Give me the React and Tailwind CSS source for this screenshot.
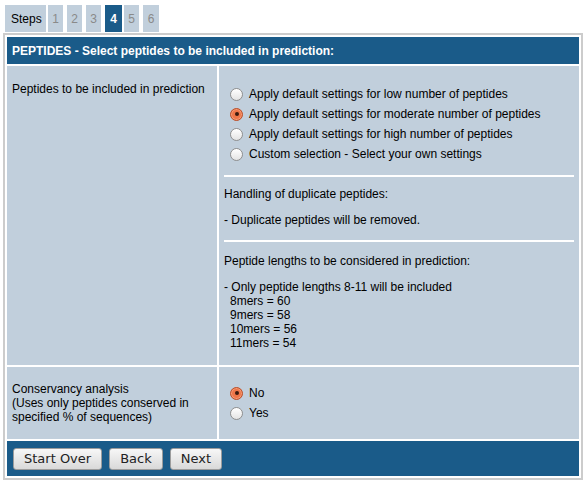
const OPTIONS = [
  "Apply default settings for low number of peptides",
  "Apply default settings for moderate number of peptides",
  "Apply default settings for high number of peptides",
  "Custom selection - Select your own settings"
];

const LENGTHS = ["8mers = 60", "9mers = 58", "10mers = 56", "11mers = 54"];

function Radio({ checked }) {
  if (checked) {
    return (
      <span className="flex h-[13px] w-[13px] shrink-0 items-center justify-center rounded-full border border-[#b9502b] bg-[#ee7649] shadow-[inset_0_0_0_1px_#f59a74]">
        <span className="h-[4px] w-[4px] rounded-full bg-[#3b1a0e]" />
      </span>
    );
  }
  return (
    <span className="h-[13px] w-[13px] shrink-0 rounded-full border border-[#8f8f8f] bg-linear-to-b from-white to-[#e4e4e4]" />
  );
}

function RadioRow({ checked, label }) {
  return (
    <div className="flex h-[20px] items-center pl-[11px]">
      <Radio checked={checked} />
      <span className="ml-[6px]">{label}</span>
    </div>
  );
}

function Button({ children }) {
  return (
    <button
      type="button"
      className="h-[22px] rounded-[3px] border border-[#9c9c9c] bg-linear-to-b from-[#f7f7f7] to-[#d9d9d9] px-[10px] font-['DejaVu_Sans',sans-serif] text-[13px] leading-[20px] text-[#222]"
    >
      {children}
    </button>
  );
}

function App() {
  return (
    <main className="min-h-screen bg-white font-['Liberation_Sans',Arial,sans-serif] text-[12px] leading-[14px] text-black">
      <div className="flex gap-[4px] pl-[5px] pt-[5px]">
        <div className="flex h-[27px] w-[41px] items-center bg-[#c1cfdc] pl-[6px]">Steps</div>
        <div className="-ml-[2px] flex h-[27px] w-[15px] items-center justify-center bg-[#c1cfdc] text-[#8a8a8a]">1</div>
        <div className="flex h-[27px] w-[15px] items-center justify-center bg-[#c1cfdc] text-[#8a8a8a]">2</div>
        <div className="flex h-[27px] w-[15px] items-center justify-center bg-[#c1cfdc] text-[#8a8a8a]">3</div>
        <div className="flex h-[27px] w-[17px] items-center justify-center bg-[#1a5b89] font-bold text-white">4</div>
        <div className="-ml-[2px] flex h-[27px] w-[15px] items-center justify-center bg-[#c1cfdc] text-[#8a8a8a]">5</div>
        <div className="flex h-[27px] w-[16px] items-center justify-center bg-[#c1cfdc] text-[#8a8a8a]">6</div>
      </div>

      <div className="ml-[3px] mt-[1px] w-[580px] border-2 border-[#cccccc] p-[2px]">
        <div className="flex flex-col gap-[2px]">
          <div className="flex h-[27px] items-center bg-[#1a5b89] pl-[5px] font-bold text-white">
            PEPTIDES - Select peptides to be included in prediction:
          </div>

          <div className="grid grid-cols-[210px_1fr] gap-x-[2px]">
            <div className="bg-[#c1cfdc] pl-[5px] pt-[16px]">Peptides to be included in prediction</div>
            <div className="h-[299px] bg-[#c1cfdc] pt-[18px]">
              {OPTIONS.map((label, i) => (
                <RadioRow key={label} label={label} checked={i === 1} />
              ))}
              <div className="mx-[5px] mt-[11px] h-[2px] bg-white" />
              <div className="px-[5px]">
                <p className="mt-[10px]">Handling of duplicate peptides:</p>
                <p className="mt-[12px]">- Duplicate peptides will be removed.</p>
              </div>
              <div className="mx-[5px] mt-[13px] h-[2px] bg-white" />
              <div className="px-[5px]">
                <p className="mt-[12px]">Peptide lengths to be considered in prediction:</p>
                <p className="mt-[12px]">- Only peptide lengths 8-11 will be included</p>
                {LENGTHS.map((line) => (
                  <p key={line} className="pl-[6px]">
                    {line}
                  </p>
                ))}
              </div>
            </div>
          </div>

          <div className="grid h-[72px] grid-cols-[210px_1fr] gap-x-[2px]">
            <div className="flex flex-col justify-center bg-[#c1cfdc] pl-[5px]">
              <p>Conservancy analysis</p>
              <p>(Uses only peptides conserved in</p>
              <p>specified % of sequences)</p>
            </div>
            <div className="flex flex-col justify-center bg-[#c1cfdc]">
              <RadioRow label="No" checked />
              <RadioRow label="Yes" />
            </div>
          </div>

          <div className="flex h-[35px] items-center gap-[7px] bg-[#1a5b89] pl-[6px]">
            <Button>Start Over</Button>
            <Button>Back</Button>
            <Button>Next</Button>
          </div>
        </div>
      </div>
    </main>
  );
}

export default App;
